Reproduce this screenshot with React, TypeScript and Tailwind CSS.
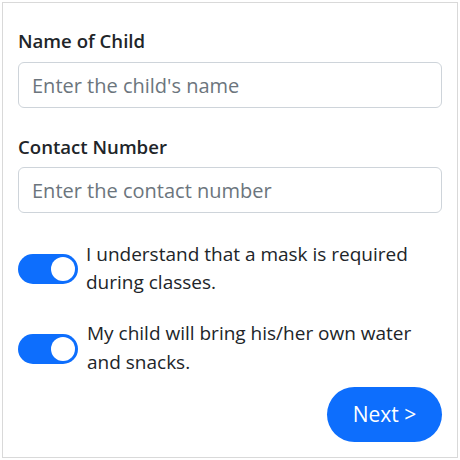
import React from "react";

function Toggle() {
  return (
    <div className="w-[60px] h-[30px] shrink-0 rounded-full bg-[#0d6efd] flex items-center justify-end pr-[3px]">
      <div className="w-[24px] h-[24px] rounded-full bg-white" />
    </div>
  );
}

export default function App() {
  return (
    <div className="w-[460px] h-[460px] bg-white p-[2px]" style={{ fontFamily: '"Open Sans", "Noto Sans", sans-serif' }}>
      <div className="w-[456px] h-[456px] border border-[#d9d9d9] px-[15px] pt-[25px] flex flex-col">
        <label className="text-[18.6px] font-semibold text-[#212529] leading-[26px]">Name of Child</label>
        <input
          className="mt-[8px] h-[46px] w-full rounded-[6px] border border-[#ced4da] px-[13px] text-[20px] text-[#212529] placeholder:text-[#6c757d] outline-none"
          placeholder="Enter the child's name"
        />
        <label className="mt-[26px] text-[18.6px] font-semibold text-[#212529] leading-[26px]">Contact Number</label>
        <input
          className="mt-[7px] h-[46px] w-full rounded-[6px] border border-[#ced4da] px-[13px] text-[20px] text-[#212529] placeholder:text-[#6c757d] outline-none"
          placeholder="Enter the contact number"
        />
        <div className="mt-[27px] flex items-start gap-[8px]">
          <div className="mt-[14px]"><Toggle /></div>
          <p className="text-[19px] leading-[28px] text-[#212529]">I understand that a mask is required during classes.</p>
        </div>
        <div className="mt-[23px] flex items-start gap-[9px]">
          <div className="mt-[15px]"><Toggle /></div>
          <p className="text-[19px] leading-[29px] text-[#212529]">My child will bring his/her own water and snacks.</p>
        </div>
        <div className="mt-[10px] flex justify-end">
          <button className="h-[55px] w-[115px] rounded-full bg-[#0d6efd] text-white text-[21px]">Next &gt;</button>
        </div>
      </div>
    </div>
  );
}
